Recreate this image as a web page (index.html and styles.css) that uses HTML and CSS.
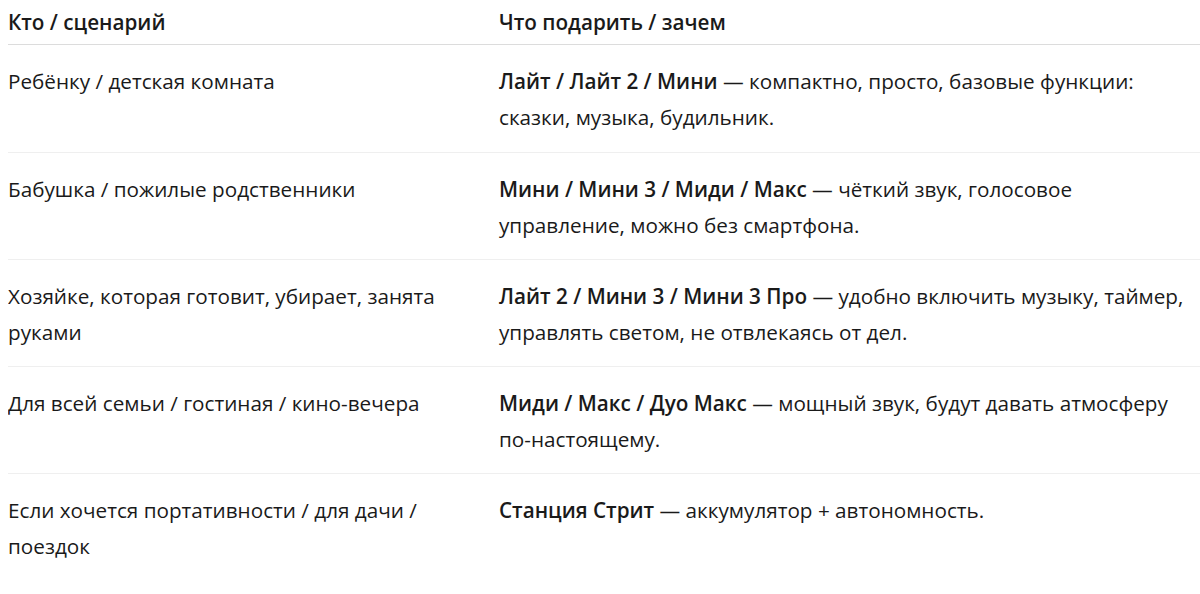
FILE: index.html
```html
<!DOCTYPE html>
<html lang="ru">
<head>
<meta charset="utf-8">
<link rel="stylesheet" href="styles.css">
</head>
<body>
<table class="gift-table">
  <thead>
    <tr>
      <th class="col-who">Кто / сценарий</th>
      <th class="col-what">Что подарить / зачем</th>
    </tr>
  </thead>
  <tbody>
    <tr>
      <td class="col-who">Ребёнку / детская комната</td>
      <td class="col-what"><strong>Лайт / Лайт 2 / Мини</strong> — компактно, просто, базовые функции: сказки, музыка, будильник.</td>
    </tr>
    <tr>
      <td class="col-who">Бабушка / пожилые родственники</td>
      <td class="col-what"><strong>Мини / Мини 3 / Миди / Макс</strong> — чёткий звук, голосовое управление, можно без смартфона.</td>
    </tr>
    <tr>
      <td class="col-who">Хозяйке, которая готовит, убирает, занята руками</td>
      <td class="col-what"><strong>Лайт 2 / Мини 3 / Мини 3 Про</strong> — удобно включить музыку, таймер, управлять светом, не отвлекаясь от дел.</td>
    </tr>
    <tr>
      <td class="col-who">Для всей семьи / гостиная / кино-вечера</td>
      <td class="col-what"><strong>Миди / Макс / Дуо Макс</strong> — мощный звук, будут давать атмосферу по-настоящему.</td>
    </tr>
    <tr>
      <td class="col-who">Если хочется портативности / для дачи / поездок</td>
      <td class="col-what"><strong>Станция Стрит</strong> — аккумулятор + автономность.</td>
    </tr>
  </tbody>
</table>
</body>
</html>
```

FILE: styles.css
```css
html, body {
  background: #ffffff;
}
body {
  margin: 8px 0 0 8px;
  font-family: "Open Sans", "Noto Sans", sans-serif;
  font-size: 20.7px;
  color: #1a1a1a;
}
.gift-table {
  width: 1192px;
  border-collapse: collapse;
  table-layout: fixed;
}
.gift-table th {
  text-align: left;
  font-weight: 600;
  line-height: 28px;
  padding: 0 0 8px 0;
  border-bottom: 1px solid #dcdcdc;
}
.gift-table td {
  vertical-align: top;
  line-height: 36px;
  padding: 18px 0 16px 0;
  border-bottom: 1px solid #efefef;
}
.gift-table tbody tr:first-child td {
  padding-bottom: 17px;
}
.gift-table tbody tr:last-child td {
  border-bottom: none;
}
.gift-table .col-who {
  width: 451px;
  padding-right: 40px;
}
.gift-table .col-what {
  padding-right: 14px;
}
.gift-table strong {
  font-weight: 600;
}
```
